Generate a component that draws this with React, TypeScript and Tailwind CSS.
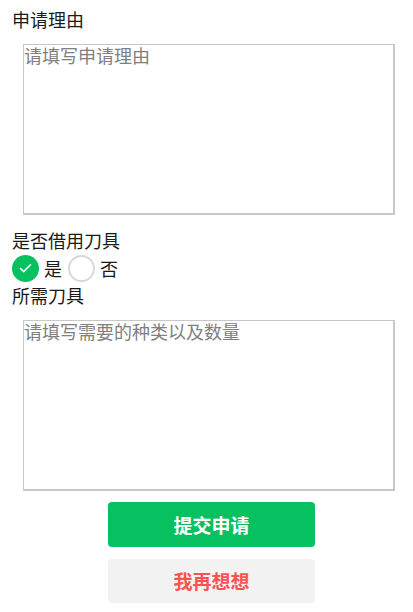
import { Check } from "lucide-react";

const font = { fontFamily: '"Noto Sans CJK SC", sans-serif' };

function Box({ placeholder }: { placeholder: string }) {
  return (
    <div className="ml-[23px] h-[171px] w-[372px] border border-r-2 border-b-2 border-[#c8c8c8] bg-white text-[18px] leading-[20px] text-[#808080]">
      {placeholder}
    </div>
  );
}

export default function App() {
  return (
    <div style={font} className="h-[612px] w-[413px] overflow-hidden bg-white pt-[7px] text-[18px] leading-[24px] text-[#1a1a1a]">
      <div className="ml-3 h-[37px]">申请理由</div>
      <Box placeholder="请填写申请理由" />
      <div className="ml-3 mt-[13px]">是否借用刀具</div>
      <div className="ml-3 mt-[2px] flex h-[28px] items-center">
        <span className="flex h-[27px] w-[27px] items-center justify-center rounded-full bg-[#07c160]">
          <Check size={15} color="#fff" strokeWidth={2.5} />
        </span>
        <span className="ml-[5px]">是</span>
        <span className="ml-[6px] h-[27px] w-[27px] rounded-full border-2 border-[#d8d8d8]" />
        <span className="ml-[5px]">否</span>
      </div>
      <div className="ml-3 mt-[1px] h-[37px]">所需刀具</div>
      <Box placeholder="请填写需要的种类以及数量" />
      <div className="mt-[11px] ml-[108px] flex flex-col">
        <button className="h-[45px] w-[207px] rounded-[4px] bg-[#07c160] text-[19px] font-bold text-white">提交申请</button>
        <button className="mt-3 h-[44px] w-[207px] rounded-[4px] bg-[#f2f2f2] text-[19px] font-bold text-[#fa5151]">我再想想</button>
      </div>
    </div>
  );
}
